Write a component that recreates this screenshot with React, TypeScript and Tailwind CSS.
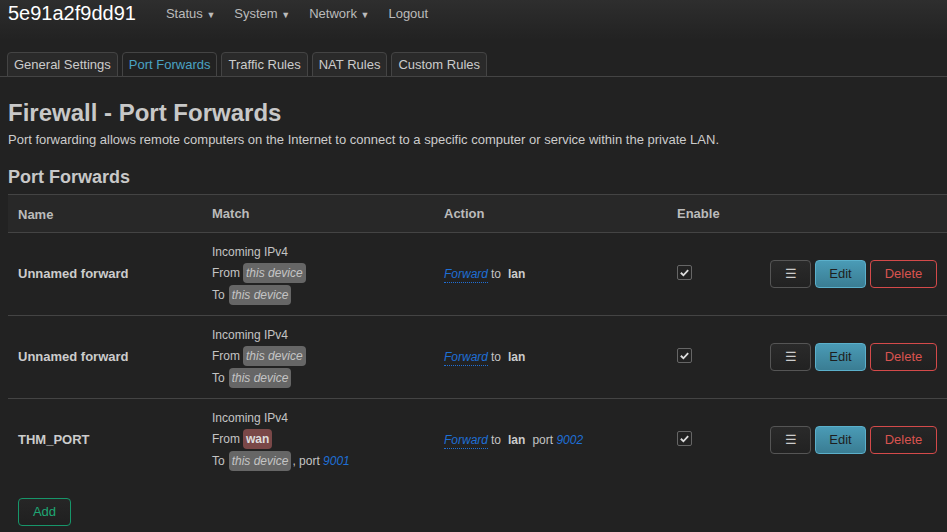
import { ReactNode } from "react";

const tabs = ["General Settings", "Port Forwards", "Traffic Rules", "NAT Rules", "Custom Rules"];

const Badge = ({ children, wan }: { children: ReactNode; wan?: boolean }) => (
  <span
    className={`inline-block rounded-[4px] px-[3px] leading-[20px] ${
      wan ? "bg-[#7a4848] font-bold not-italic text-[#ddd]" : "bg-[#666] italic text-[#c4c4c4]"
    }`}
  >
    {children}
  </span>
);

const Blue = ({ children }: { children: ReactNode }) => (
  <span className="italic text-[#1f6fd6]">{children}</span>
);

type Rule = { name: string; wan?: boolean; srcPort?: string; destPort?: string };

const rules: Rule[] = [
  { name: "Unnamed forward" },
  { name: "Unnamed forward" },
  { name: "THM_PORT", wan: true, srcPort: "9001", destPort: "9002" },
];

const Row = ({ rule }: { rule: Rule }) => (
  <div className="grid h-[83px] grid-cols-[194px_232px_233px_94px_1fr] border-t border-[#444] text-[12px]">
    <div className="flex items-center pl-[10px] text-[13px] font-bold text-[#ccc]">{rule.name}</div>
    <div className="flex flex-col justify-center pl-[10px] text-[#c4c4c4]">
      <div className="h-[20px] leading-[20px]">Incoming IPv4</div>
      <div className="flex h-[22px] items-center gap-[3px]">
        From {rule.wan ? <Badge wan>wan</Badge> : <Badge>this device</Badge>}
      </div>
      <div className="flex h-[22px] items-center gap-[4px]">
        To <Badge>this device</Badge>
        {rule.srcPort && (
          <span className="-ml-[3px]">
            , port <Blue>{rule.srcPort}</Blue>
          </span>
        )}
      </div>
    </div>
    <div className="flex items-center pl-[10px] text-[#c4c4c4]">
      <span className="border-b border-dotted border-[#1f6fd6] leading-[16px]">
        <Blue>Forward</Blue>
      </span>
      <span className="ml-[3px]">to</span>
      <span className="ml-[7px] font-bold text-[#ccc]">lan</span>
      {rule.destPort && (
        <span className="ml-[7px]">
          port <Blue>{rule.destPort}</Blue>
        </span>
      )}
    </div>
    <div className="flex items-center pl-[10px]">
      <span className="-mt-[3px] flex h-[15px] w-[15px] items-center justify-center rounded-[2px] border border-[#666]">
        <svg width="11" height="11" viewBox="0 0 12 12">
          <path d="M2 6.3 L4.8 9 L10 3.4" fill="none" stroke="#ddd" strokeWidth="2" />
        </svg>
      </span>
    </div>
    <div className="flex items-center justify-end gap-[4px] pr-[10px] text-[13px]">
      <button className="flex h-[28px] w-[41px] items-center justify-center rounded-[4px] border border-[#555] bg-gradient-to-b from-[#2a2a2a] to-[#222] text-[#ccc]">
        ☰
      </button>
      <button className="h-[28px] w-[51px] rounded-[4px] border border-[#5bb0cb] bg-gradient-to-b from-[#4a9bb6] to-[#3a7d93] text-[#1e1e1e]">
        Edit
      </button>
      <button className="h-[28px] w-[67px] rounded-[4px] border border-[#d44a4a] bg-gradient-to-b from-[#262626] to-[#202020] text-[#d9534f]">
        Delete
      </button>
    </div>
  </div>
);

export default function App() {
  return (
    <div className="min-h-[532px] bg-[#222] font-['Liberation_Sans',Arial,sans-serif] text-[#ccc]">
      <div className="flex h-[40px] items-start bg-gradient-to-b from-[#2e2e2e] to-[#222] pl-[8px] pt-[1px]">
        <span className="text-[20px] leading-[24px] text-white">5e91a2f9dd91</span>
        <nav className="ml-[30px] flex gap-[19px] pt-[4px] text-[13px] leading-[18px] text-[#bbb]">
          <span>Status <span className="text-[9px]">▼</span></span>
          <span>System <span className="text-[9px]">▼</span></span>
          <span>Network <span className="text-[9px]">▼</span></span>
          <span>Logout</span>
        </nav>
      </div>

      <div className="mt-[12px] flex gap-[4px] border-b border-[#444] pl-[7px]">
        {tabs.map((t, i) => (
          <div
            key={t}
            className={`-mb-px h-[25px] rounded-t-[4px] border border-[#444] px-[6px] text-[13px] leading-[24px] ${
              i === 1 ? "bg-[#222] text-[#4aa3c4]" : "bg-[#2a2a2a] text-[#ccc]"
            }`}
          >
            {t}
          </div>
        ))}
      </div>

      <div className="px-[8px]">
        <h1 className="mt-[23px] text-[24px] font-bold leading-[26px] text-[#c8c8c8]">Firewall - Port Forwards</h1>
        <p className="mt-[5px] text-[13px] leading-[18px] text-[#ccc]">
          Port forwarding allows remote computers on the Internet to connect to a specific computer or service within the private LAN.
        </p>
        <h3 className="mt-[17px] text-[18px] font-bold leading-[22px] text-[#c8c8c8]">Port Forwards</h3>

        <div className="-mr-[8px] mt-[6px] border-t border-[#444]">
          <div className="grid h-[37px] grid-cols-[194px_232px_233px_94px_1fr] items-center bg-[#282828] text-[13px] font-bold text-[#bbb]">
            <div className="pl-[10px] pt-[2px]">Name</div>
            <div className="pl-[10px]">Match</div>
            <div className="pl-[10px]">Action</div>
            <div className="pl-[10px]">Enable</div>
            <div />
          </div>
          {rules.map((r, i) => (
            <Row key={i} rule={r} />
          ))}
        </div>

        <button className="ml-[10px] mt-[17px] h-[28px] w-[53px] rounded-[4px] border border-[#17966a] bg-gradient-to-b from-[#262626] to-[#202020] text-[13px] text-[#1fa774]">
          Add
        </button>
      </div>
    </div>
  );
}
